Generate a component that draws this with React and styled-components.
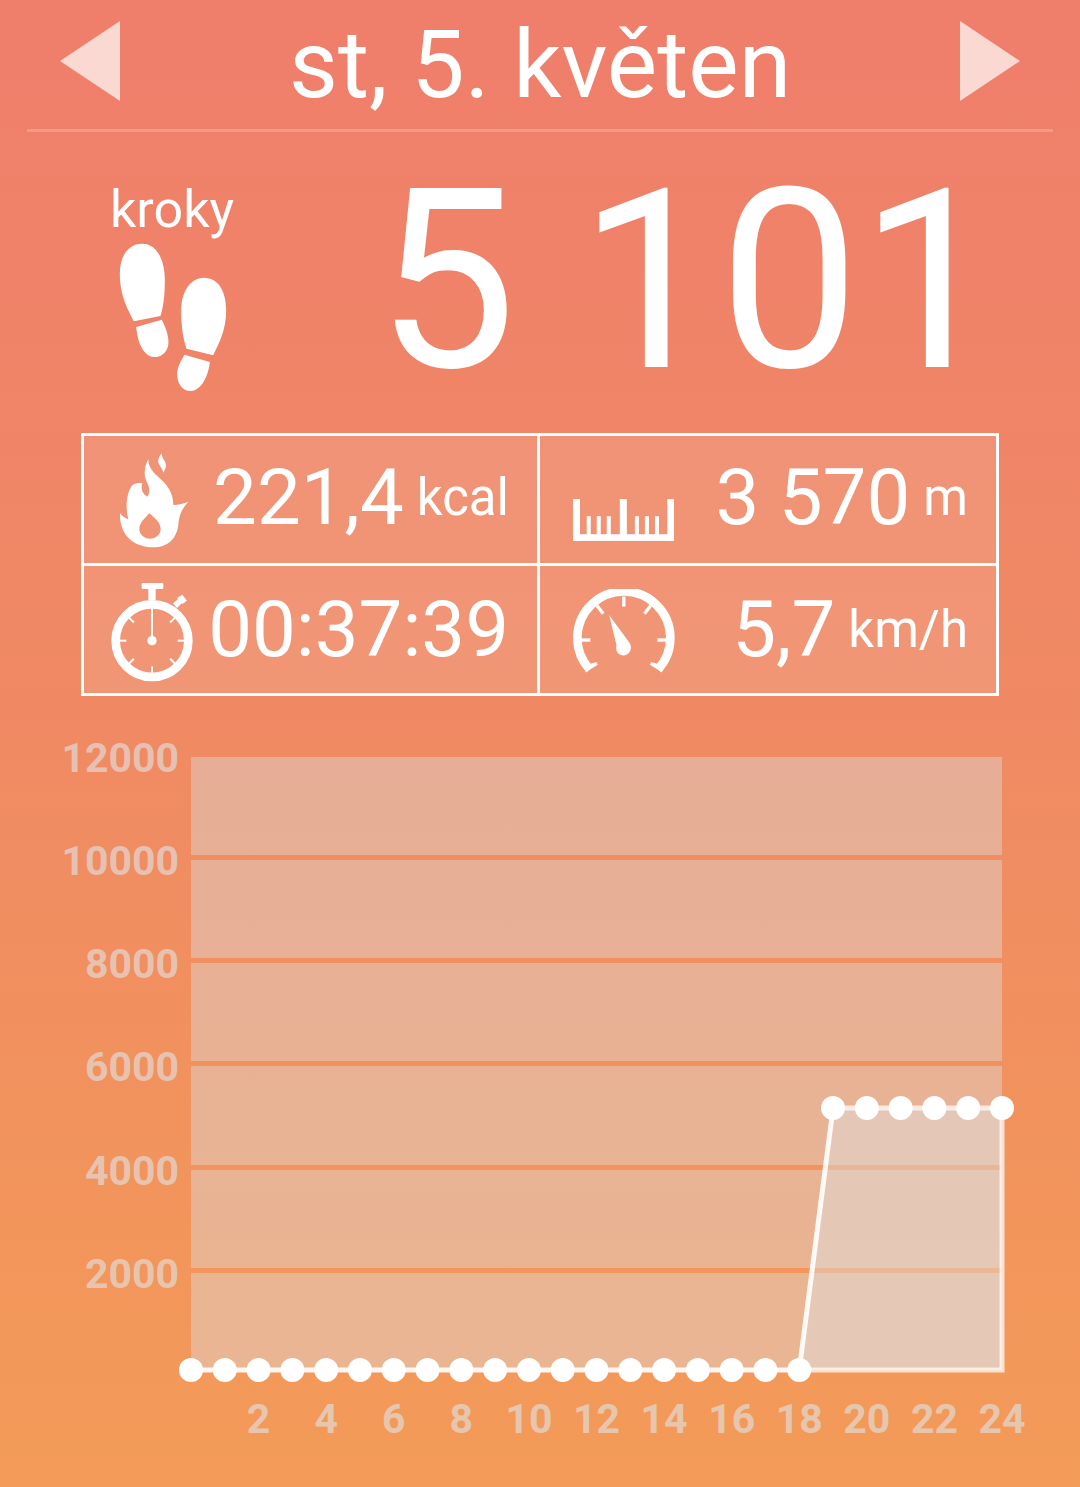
import React from 'react';
import styled, { createGlobalStyle } from 'styled-components';

const GlobalStyle = createGlobalStyle`
    html, body {
        margin: 0;
        padding: 0;
    }
    body {
        font-family: Roboto, "Liberation Sans", sans-serif;
        overflow: hidden;
    }
`;

const Page = styled.div`
    width: 1080px;
    height: 1487px;
    overflow: hidden;
    color: #fff;
    background: linear-gradient(180deg, #ef7e6b 0%, #f08a63 50%, #f39b58 100%);
`;

const Header = styled.div`
    display: flex;
    align-items: center;
    justify-content: space-between;
    height: 129px;
    margin: 0 27px;
    padding: 0 33px;
    border-bottom: 3px solid rgba(255, 255, 255, 0.2);
`;

const Arrow = styled.svg`
    display: block;
    width: 60px;
    height: 80px;
    margin-top: -8px;
    fill: rgba(255, 255, 255, 0.7);
`;

const DateTitle = styled.div`
    font-size: 95px;
    line-height: 129px;
    font-weight: 400;
`;

const StepsRow = styled.div`
    display: flex;
    justify-content: space-between;
    height: 301px;
    padding: 0 111px 0 110px;
`;

const StepsLabel = styled.div`
    display: flex;
    flex-direction: column;
    font-size: 52px;
    line-height: 60px;
    padding-top: 48px;
`;

const Feet = styled.svg`
    display: block;
    width: 112px;
    height: 150px;
    margin: 2px 0 0 7px;
    fill: #fff;
`;

const StepsValue = styled.div`
    font-size: 250px;
    font-weight: 400;
    line-height: 253px;
    margin: 23px -31px 0 0;
    white-space: nowrap;
`;

const StatsGrid = styled.div`
    display: grid;
    grid-template-columns: 453px 459px;
    grid-template-rows: 130px 130px;
    width: 918px;
    margin-left: 81px;
    box-sizing: border-box;
    border: solid #fff;
    border-width: 3px 3px 0 3px;
    background: rgba(255, 255, 255, 0.11);
`;

const StatCell = styled.div`
    display: flex;
    align-items: center;
    box-sizing: border-box;
    padding: 0 28px 0 ${({ $pad }) => $pad}px;
    border-bottom: 3px solid #fff;
    border-left: ${({ $right }) => ($right ? '3px solid #fff' : 'none')};
`;

const StatIcon = styled.svg`
    display: block;
    flex: none;
    width: ${({ $w }) => $w}px;
    height: ${({ $h }) => $h}px;
    margin-top: ${({ $top }) => $top || 0}px;
    fill: #fff;
    stroke: none;
`;

const StatText = styled.div`
    display: flex;
    align-items: center;
    margin-left: auto;
    margin-top: ${({ $lift }) => ($lift ? '-4px' : '0')};
    font-size: 78px;
    line-height: 90px;
    font-weight: 400;
    white-space: nowrap;
`;

const Unit = styled.span`
    font-size: 51px;
    margin-left: 13px;
`;

const ChartWrap = styled.svg`
    display: block;
    width: 1080px;
    height: 757px;
    margin-top: 34px;
`;

const Band = styled.rect`
    fill: rgba(220, 220, 220, 0.43);
`;

const Area = styled.polygon`
    fill: rgba(225, 225, 225, 0.45);
`;

const Line = styled.polyline`
    fill: none;
    stroke: rgba(255, 255, 255, ${({ $alpha }) => $alpha});
    stroke-width: 5;
`;

const Dot = styled.circle`
    fill: #fff;
`;

const AxisLabel = styled.text`
    fill: rgba(225, 225, 225, 0.64);
    font-family: Roboto, "Liberation Sans", sans-serif;
    font-size: 41px;
    font-weight: 700;
    text-anchor: ${({ $anchor }) => $anchor};
`;

const CHART_TOP = 730;
const LEFT = 191;
const STEP = 811 / 24;
const BASE = 1370 - CHART_TOP;
const TOP_VALUE = 1108 - CHART_TOP;
const xAt = (i) => LEFT + i * STEP;
const yAt = (i) => (i < 19 ? BASE : TOP_VALUE);
const hours = Array.from({ length: 25 }, (_, i) => i);
const bands = [
    { y: 757, h: 98 },
    { y: 860, h: 98 },
    { y: 963, h: 98 },
    { y: 1066, h: 99 },
    { y: 1170, h: 98 },
    { y: 1273, h: 97 },
];
const yLabels = [
    { text: '12000', y: 772 },
    { text: '10000', y: 875 },
    { text: '8000', y: 978 },
    { text: '6000', y: 1081 },
    { text: '4000', y: 1185 },
    { text: '2000', y: 1288 },
];

const stopwatchTicks = [45, 90, 135, 180, 225, 270, 315];
const rulerTicks = [147, 177, 207, 291, 321, 351];

const FeetIcon = () => (
    <Feet viewBox="170 215 335 450">
        <path d="M245 220C290 220 313 270 313 330C313 380 308 410 300 437L220 453C205 420 178 380 178 310C178 255 205 220 245 220Z" />
        <path d="M227 470L304 448C320 480 328 510 322 530C315 552 295 562 280 560C250 558 232 520 227 470Z" />
        <path d="M430 322C475 322 497 365 497 420C497 480 475 520 458 555L378 535C368 505 362 470 362 420C362 365 390 322 430 322Z" />
        <path d="M372 553L448 575C445 610 425 662 390 662C362 662 350 635 350 610C350 590 362 570 372 553Z" />
    </Feet>
);

const FlameIcon = () => (
    <StatIcon $w={90} $h={105} $top={6} viewBox="0 0 270 315">
        <path
            fillRule="evenodd"
            d="M130 292C70 292 28 255 30 190C38 200 45 205 55 208C45 170 50 125 68 105C78 98 90 98 97 100C92 115 95 130 112 140C122 125 118 110 108 90C100 70 105 45 115 28C115 60 140 75 160 95C180 115 190 140 190 165C205 165 222 160 236 155C222 170 208 185 205 225C200 265 175 292 130 292ZM118 190C135 205 152 218 152 237C152 253 138 266 120 266C102 266 88 253 88 237C88 218 105 205 118 190Z"
        />
        <path d="M155 10C143 25 142 38 150 48C155 55 158 60 160 68C170 52 170 40 162 30C158 25 155 18 155 10Z" />
    </StatIcon>
);

const StopwatchIcon = () => (
    <StatIcon $w={95} $h={105} $top={2} viewBox="0 0 285 315">
        <rect x="110" y="15" width="65" height="18" rx="4" />
        <rect x="130" y="30" width="22" height="36" />
        <path d="M204 76L226 58L236 70L216 90Z" />
        <path d="M216 60L232 50L246 68L232 78Z" />
        <circle cx="141" cy="188" r="109" fill="none" stroke="#fff" strokeWidth="26" />
        {stopwatchTicks.map((a) => (
            <rect key={a} x="138" y="85" width="6" height="26" transform={`rotate(${a} 141 188)`} />
        ))}
        <rect x="138" y="90" width="6" height="98" />
        <circle cx="141" cy="188" r="14" />
    </StatIcon>
);

const RulerIcon = () => (
    <StatIcon $w={101} $h={42} $top={41} viewBox="100 207 302 125">
        <rect x="100" y="207" width="21" height="125" />
        <rect x="382" y="207" width="20" height="125" />
        <rect x="100" y="312" width="302" height="20" />
        <rect x="240" y="207" width="21" height="110" />
        {rulerTicks.map((x) => (
            <rect key={x} x={x - 6} y="258" width="12" height="56" />
        ))}
    </StatIcon>
);

const GaugeIcon = () => (
    <StatIcon $w={102} $h={84} $top={3} viewBox="98 478 305 250">
        <path
            d="M148 718A139 139 0 1 1 352 718"
            fill="none"
            stroke="#fff"
            strokeWidth="26"
        />
        <rect x="245" y="500" width="10" height="30" />
        <rect x="245" y="500" width="10" height="30" transform="rotate(-38 250 630)" />
        <rect x="245" y="500" width="10" height="30" transform="rotate(38 250 630)" />
        <rect x="245" y="500" width="10" height="30" transform="rotate(-90 250 630)" />
        <rect x="245" y="500" width="10" height="30" transform="rotate(90 250 630)" />
        <path d="M130 708L168 696L172 704L136 726Z" />
        <path d="M370 708L332 696L328 704L364 726Z" />
        <path d="M206 555L268 640C276 655 268 675 250 676C232 676 224 662 228 645Z" />
    </StatIcon>
);

const Chart = () => (
    <ChartWrap viewBox={`0 ${CHART_TOP} 1080 757`}>
        {bands.map((b) => (
            <Band key={b.y} x={LEFT} y={b.y} width="811" height={b.h} />
        ))}
        <Area points={`${xAt(18)},1370 ${xAt(19)},1108 ${xAt(24)},1108 ${xAt(24)},1370`} />
        <Line $alpha={0.7} points={`${xAt(19)},1108 ${xAt(24)},1108 ${xAt(24)},1370 ${xAt(18)},1370`} />
        <Line $alpha={0.9} points={`${xAt(0)},1370 ${xAt(18)},1370 ${xAt(19)},1108`} />
        {hours.map((i) => (
            <Dot key={i} cx={xAt(i)} cy={yAt(i) + CHART_TOP} r="12" />
        ))}
        {yLabels.map((l) => (
            <AxisLabel key={l.text} $anchor="end" x="179" y={l.y}>
                {l.text}
            </AxisLabel>
        ))}
        {hours
            .filter((i) => i > 0 && i % 2 === 0)
            .map((i) => (
                <AxisLabel key={i} $anchor="middle" x={xAt(i)} y="1433">
                    {i}
                </AxisLabel>
            ))}
    </ChartWrap>
);

export default function App() {
    return (
        <Page>
            <GlobalStyle />
            <Header>
                <Arrow viewBox="0 0 60 80">
                    <polygon points="60,0 60,80 0,40" />
                </Arrow>
                <DateTitle>st, 5. květen</DateTitle>
                <Arrow viewBox="0 0 60 80">
                    <polygon points="0,0 0,80 60,40" />
                </Arrow>
            </Header>
            <StepsRow>
                <StepsLabel>
                    kroky
                    <FeetIcon />
                </StepsLabel>
                <StepsValue>5 101</StepsValue>
            </StepsRow>
            <StatsGrid>
                <StatCell $pad={26}>
                    <FlameIcon />
                    <StatText $lift>
                        221,4<Unit>kcal</Unit>
                    </StatText>
                </StatCell>
                <StatCell $right $pad={33}>
                    <RulerIcon />
                    <StatText $lift>
                        3 570<Unit>m</Unit>
                    </StatText>
                </StatCell>
                <StatCell $pad={21}>
                    <StopwatchIcon />
                    <StatText>00:37:39</StatText>
                </StatCell>
                <StatCell $right $pad={33}>
                    <GaugeIcon />
                    <StatText>
                        5,7<Unit>km/h</Unit>
                    </StatText>
                </StatCell>
            </StatsGrid>
            <Chart />
        </Page>
    );
}
